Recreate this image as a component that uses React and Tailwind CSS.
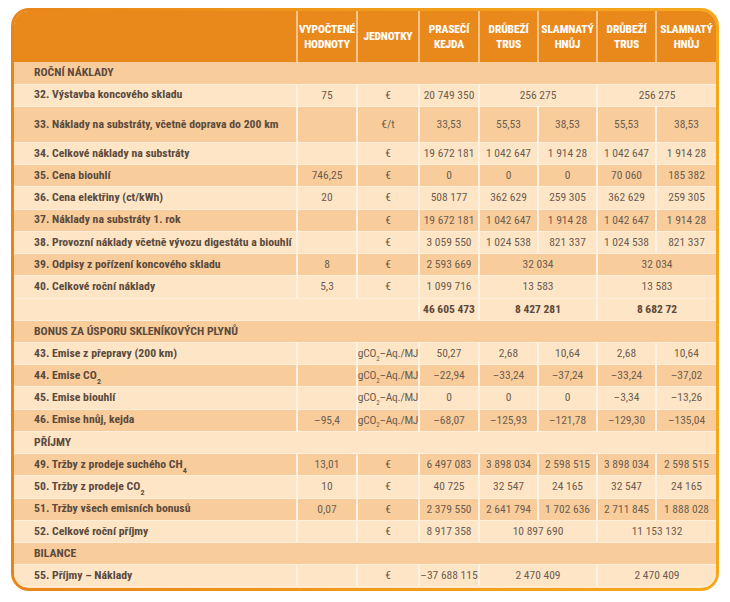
const W = [284, 60, 62, 60, 59, 59, 59, 59];
const LIGHT = "bg-[#fde5c6]";
const DARK = "bg-[#f9cd9b]";

const U = (
  <span className="tracking-[-0.25px]">
    gCO<sub className="text-[7px] align-[-2px]">2</sub>–Aq./MJ
  </span>
);
const CO2 = (
  <span>
    CO<sub className="text-[8px] align-[-3px]">2</sub>
  </span>
);
const CH4 = (
  <span>
    CH<sub className="text-[8px] align-[-3px]">4</sub>
  </span>
);

const rows = [
  { type: "section", label: "ROČNÍ NÁKLADY", dark: true },
  { label: "32. Výstavba koncového skladu", cells: [["75", 1], ["€", 1], ["20 749 350", 1], ["256 275", 2], ["256 275", 2]] },
  { label: "33. Náklady na substráty, včetně doprava do 200 km", dark: true, tall: true, cells: [["", 1], ["€/t", 1], ["33,53", 1], ["55,53", 1], ["38,53", 1], ["55,53", 1], ["38,53", 1]] },
  { label: "34. Celkové náklady na substráty", cells: [["", 1], ["€", 1], ["19 672 181", 1], ["1 042 647", 1], ["1 914 28", 1], ["1 042 647", 1], ["1 914 28", 1]] },
  { label: "35. Cena biouhlí", dark: true, cells: [["746,25", 1], ["€", 1], ["0", 1], ["0", 1], ["0", 1], ["70 060", 1], ["185 382", 1]] },
  { label: "36. Cena elektřiny (ct/kWh)", cells: [["20", 1], ["€", 1], ["508 177", 1], ["362 629", 1], ["259 305", 1], ["362 629", 1], ["259 305", 1]] },
  { label: "37. Náklady na substráty 1. rok", dark: true, cells: [["", 1], ["€", 1], ["19 672 181", 1], ["1 042 647", 1], ["1 914 28", 1], ["1 042 647", 1], ["1 914 28", 1]] },
  { label: "38. Provozní náklady včetně vývozu digestátu a biouhlí", cells: [["", 1], ["€", 1], ["3 059 550", 1], ["1 024 538", 1], ["821 337", 1], ["1 024 538", 1], ["821 337", 1]] },
  { label: "39. Odpisy z pořízení koncového skladu", dark: true, cells: [["8", 1], ["€", 1], ["2 593 669", 1], ["32 034", 2], ["32 034", 2]] },
  { label: "40. Celkové roční náklady", cells: [["5,3", 1], ["€", 1], ["1 099 716", 1], ["13 583", 2], ["13 583", 2]] },
  { type: "total", cells: [["46 605 473", 1], ["8 427 281", 2], ["8 682 72", 2]] },
  { type: "section", label: "BONUS ZA ÚSPORU SKLENÍKOVÝCH PLYNŮ", dark: true },
  { label: "43. Emise z přepravy (200 km)", cells: [["", 1], [U, 1], ["50,27", 1], ["2,68", 1], ["10,64", 1], ["2,68", 1], ["10,64", 1]] },
  { label: <span>44. Emise {CO2}</span>, dark: true, cells: [["", 1], [U, 1], ["–22,94", 1], ["–33,24", 1], ["–37,24", 1], ["–33,24", 1], ["–37,02", 1]] },
  { label: "45. Emise biouhlí", cells: [["", 1], [U, 1], ["0", 1], ["0", 1], ["0", 1], ["–3,34", 1], ["–13,26", 1]] },
  { label: "46. Emise hnůj, kejda", dark: true, cells: [["–95,4", 1], [U, 1], ["–68,07", 1], ["–125,93", 1], ["–121,78", 1], ["–129,30", 1], ["–135,04", 1]] },
  { type: "section", label: "PŘÍJMY" },
  { label: <span>49. Tržby z prodeje suchého {CH4}</span>, dark: true, cells: [["13,01", 1], ["€", 1], ["6 497 083", 1], ["3 898 034", 1], ["2 598 515", 1], ["3 898 034", 1], ["2 598 515", 1]] },
  { label: <span>50. Tržby z prodeje {CO2}</span>, cells: [["10", 1], ["€", 1], ["40 725", 1], ["32 547", 1], ["24 165", 1], ["32 547", 1], ["24 165", 1]] },
  { label: "51. Tržby všech emisních bonusů", dark: true, cells: [["0,07", 1], ["€", 1], ["2 379 550", 1], ["2 641 794", 1], ["1 702 636", 1], ["2 711 845", 1], ["1 888 028", 1]] },
  { label: "52. Celkové roční příjmy", cells: [["", 1], ["€", 1], ["8 917 358", 1], ["10 897 690", 2], ["11 153 132", 2]] },
  { type: "section", label: "BILANCE", dark: true },
  { label: "55. Příjmy – Náklady", cells: [["", 1], ["€", 1], ["–37 688 115", 1], ["2 470 409", 2], ["2 470 409", 2]] },
];

function widthOf(start, span) {
  let w = 0;
  for (let i = start; i < start + span; i++) w += W[i];
  return w;
}

const COND = "[font-family:Roboto,sans-serif] font-stretch-condensed [font-stretch:75%]";

function Row({ r }) {
  const bg = r.dark ? DARK : LIGHT;
  const h = r.tall ? "h-[36.3px]" : "h-[22.22px]";
  if (r.type === "section") {
    return (
      <div className={`${bg} ${h} ${COND} flex items-center pl-5 border-b border-[#fdeedb] font-bold text-[#5b4a3d] text-[11.75px]`}>
        {r.label}
      </div>
    );
  }
  let col = r.type === "total" ? 3 : 1;
  const cells = [];
  if (r.type === "total") {
    cells.push(<div key="lbl" style={{ width: widthOf(0, 3) }} className="h-full border-r-2 border-[#fdf2e4]" />);
  } else {
    cells.push(
      <div key="lbl" style={{ width: W[0] }} className={`h-full flex items-center pl-5 border-r-2 border-[#fdf2e4] font-bold text-[#5b4a3d] text-[11.75px] whitespace-nowrap ${COND}`}>
        {r.label}
      </div>
    );
  }
  r.cells.forEach(([c, span], i) => {
    const w = widthOf(col, span);
    const last = col + span >= W.length;
    col += span;
    cells.push(
      <div
        key={i}
        style={{ width: w }}
        className={`h-full flex items-center justify-center whitespace-nowrap text-[11.5px] ${COND} ${r.type === "total" ? "font-bold text-[#5b4a3d]" : "text-[#6e5d50]"} ${last ? "" : "border-r-2 border-[#fdf2e4]"}`}
      >
        {c}
      </div>
    );
  });
  return <div className={`${bg} ${h} flex border-b border-[#fdeedb]`}>{cells}</div>;
}

const headers = [
  "",
  ["VYPOČTENÉ", "HODNOTY"],
  ["JEDNOTKY"],
  ["PRASEČÍ", "KEJDA"],
  ["DRŮBEŽÍ", "TRUS"],
  ["SLAMNATÝ", "HNŮJ"],
  ["DRŮBEŽÍ", "TRUS"],
  ["SLAMNATÝ", "HNŮJ"],
];

export default function App() {
  return (
    <div className="bg-white w-[730px] h-[602px] pt-[8px] pl-[11px]">
      <div className="w-[708px] h-[583px] rounded-[18px] p-[3px] bg-gradient-to-r from-[#e8851a] via-[#f09a1a] to-[#f6a81c]">
        <div className="w-full h-full rounded-[15px] overflow-hidden bg-[#fde5c6]">
          <div className="h-[51.3px] flex bg-[#e9891b]">
            {headers.map((hd, i) => (
              <div
                key={i}
                style={{ width: W[i] }}
                className={`h-full flex flex-col items-center justify-center text-white font-extrabold text-[11.5px] tracking-[-0.15px] leading-[15px] ${COND} ${i < W.length - 1 ? "border-r-2 border-[#f6c48a]" : ""}`}
              >
                {hd && hd.map((t, j) => <div key={j}>{t}</div>)}
              </div>
            ))}
          </div>
          {rows.map((r, i) => (
            <Row key={i} r={r} />
          ))}
        </div>
      </div>
    </div>
  );
}
